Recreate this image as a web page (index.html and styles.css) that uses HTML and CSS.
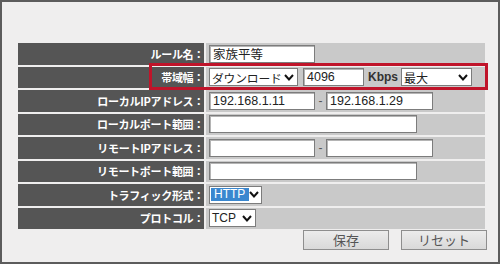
FILE: index.html
```html
<!DOCTYPE html>
<html lang="ja">
<head>
<meta charset="utf-8">
<link rel="stylesheet" href="styles.css">
</head>
<body>
<div class="frame">
  <div class="form">
    <div class="label">ルール名：</div>
    <div class="value"><div class="field w106">家族平等</div></div>

    <div class="label">帯域幅：</div>
    <div class="value">
      <div class="select w89"><span>ダウンロード</span><svg class="chev" viewBox="0 0 10 7"><polyline points="1,1 5,5.5 9,1"/></svg></div>
      <div class="field w61">4096</div>
      <span class="unit">Kbps</span>
      <div class="select w71"><span>最大</span><svg class="chev" viewBox="0 0 10 7"><polyline points="1,1 5,5.5 9,1"/></svg></div>
    </div>

    <div class="label">ローカルIPアドレス：</div>
    <div class="value"><div class="field w106">192.168.1.11</div><span class="dash">-</span><div class="field w107">192.168.1.29</div></div>

    <div class="label">ローカルポート範囲：</div>
    <div class="value"><div class="field w208"></div></div>

    <div class="label">リモートIPアドレス：</div>
    <div class="value"><div class="field w106"></div><span class="dash">-</span><div class="field w107"></div></div>

    <div class="label">リモートポート範囲：</div>
    <div class="value"><div class="field w208"></div></div>

    <div class="label">トラフィック形式：</div>
    <div class="value"><div class="select w53"><span class="hl">HTTP</span><svg class="chev" viewBox="0 0 10 7"><polyline points="1,1 5,5.5 9,1"/></svg></div></div>

    <div class="label">プロトコル：</div>
    <div class="value"><div class="select w47"><span>TCP</span><svg class="chev" viewBox="0 0 10 7"><polyline points="1,1 5,5.5 9,1"/></svg></div></div>
  </div>
  <div class="buttons">
    <button class="btn">保存</button>
    <button class="btn">リセット</button>
  </div>
  <div class="highlight"></div>
</div>
</body>
</html>
```
FILE: styles.css
```css
* { box-sizing: border-box; }
html, body { margin: 0; padding: 0; }
body {
  width: 500px;
  height: 264px;
  background: #efeeee;
  font-family: "Liberation Sans", "Noto Sans CJK JP", sans-serif;
}
.frame {
  position: relative;
  width: 500px;
  height: 264px;
  border: 2px solid #5c5c5c;
  background: #efeeee;
  padding: 41px 13px 0 16px;
}
.form {
  display: grid;
  grid-template-columns: 186px 279px;
  grid-auto-rows: 21.5px;
  column-gap: 2px;
  row-gap: 2px;
}
.label {
  background: #555555;
  color: #ffffff;
  font-family: "Noto Sans CJK JP", sans-serif;
  font-weight: 700;
  font-size: 11px;
  letter-spacing: -0.3px;
  white-space: nowrap;
  display: flex;
  align-items: center;
  justify-content: flex-end;
}
.value {
  background: #c9c9c9;
  display: flex;
  align-items: center;
  padding-left: 3px;
  font-size: 12px;
  color: #222;
  white-space: nowrap;
}
.field {
  height: 18px;
  background: #fff;
  border: 1px solid #7c7c7c;
  box-shadow: inset 1px 1px 0 #b4b4b4;
  padding-left: 3px;
  display: flex;
  align-items: center;
  font-size: 12.5px;
  color: #222;
  white-space: nowrap;
}
.select {
  height: 18px;
  background: #fff;
  border: 1px solid #7c7c7c;
  padding: 0 3px 0 2px;
  display: flex;
  align-items: center;
  justify-content: space-between;
  font-size: 12px;
  color: #222;
  white-space: nowrap;
}
.select span {
  font-family: "Liberation Sans", "Noto Sans CJK JP", sans-serif;
  white-space: nowrap;
}
.w89 span { font-size: 11.8px; letter-spacing: -0.2px; }
.chev {
  width: 10px;
  height: 7px;
  flex: none;
}
.chev polyline {
  fill: none;
  stroke: #111;
  stroke-width: 2;
}
.w106 { width: 106px; }
.w107 { width: 107px; }
.w208 { width: 208px; }
.w89 { width: 89px; }
.w61 { width: 61px; margin-left: 5px; }
.w71 { width: 71px; }
.w53 { width: 53px; padding-left: 1px; }
.w47 { width: 47px; }
.unit {
  font-weight: 700;
  font-size: 12px;
  color: #333;
  margin: 0 3px 0 4px;
}
.dash {
  width: 11px;
  text-align: center;
  color: #555;
}
.hl {
  background: #3a87cf;
  color: #fff;
  padding: 0 4px 0 3px;
  line-height: 13px;
}
.buttons {
  display: flex;
  justify-content: flex-end;
  gap: 12px;
  margin-top: 1px;
  width: 469px;
}
.btn {
  width: 86px;
  height: 20px;
  border: 1px solid #8e8e8e;
  background: linear-gradient(#ececec, #d9d9d9);
  font-family: "Noto Sans CJK JP", sans-serif;
  font-size: 13px;
  color: #555;
  padding: 0;
  line-height: 18px;
}
.highlight {
  position: absolute;
  left: 147px;
  top: 61px;
  width: 339px;
  height: 27px;
  border: 3px solid #c0142a;
}
```
